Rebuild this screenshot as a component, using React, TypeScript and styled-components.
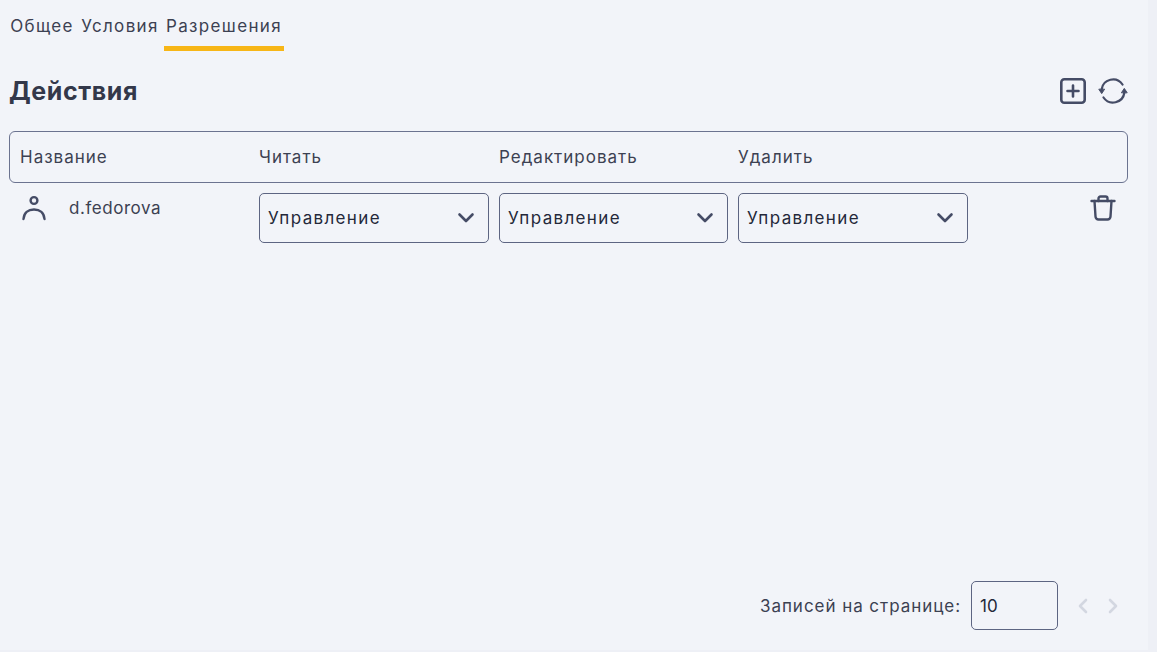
import React from "react";
import styled, { createGlobalStyle } from "styled-components";

const Global = createGlobalStyle`
  html, body { margin: 0; padding: 0; background: #eef0f6; }
  body { font-family: Inter, "Liberation Sans", sans-serif; color: #33384a; }
`;

const Panel = styled.div`
  width: 1148px;
  height: 650px;
  background: #f2f4f9;
  display: flex;
  flex-direction: column;
  padding: 0 20px 0 9px;
  box-sizing: border-box;
`;

const Tabs = styled.div`
  display: flex;
  gap: 4px;
  height: 51px;
  margin-left: -1px;
`;

const Tab = styled.div<{ $active?: boolean; $w: number }>`
  width: ${(p) => p.$w}px;
  box-sizing: border-box;
  padding-top: 16px;
  text-align: center;
  font-size: 17px;
  line-height: 20px;
  letter-spacing: 1.35px;
  white-space: nowrap;
  color: #3c4152;
  border-bottom: 5px solid ${(p) => (p.$active ? "#f7b617" : "transparent")};
`;

const TitleRow = styled.div`
  display: flex;
  align-items: center;
  justify-content: space-between;
  height: 80px;
`;

const Title = styled.h2`
  margin: 0 0 1px;
  font-size: 25px;
  font-weight: 700;
  letter-spacing: 0.6px;
  color: #33384a;
`;

const Actions = styled.div`
  display: flex;
  align-items: center;
  gap: 11px;
`;

const Icon = styled.svg`
  display: block;
  fill: none;
  stroke: #454c66;
  stroke-linecap: round;
  stroke-linejoin: round;
`;

const HeaderRow = styled.div`
  display: grid;
  grid-template-columns: 239px 240px 239px 1fr;
  align-items: center;
  height: 52px;
  box-sizing: border-box;
  padding: 0 10px;
  border: 1px solid #6b7390;
  border-radius: 6px;
`;

const HeaderCell = styled.div`
  font-size: 17px;
  letter-spacing: 1px;
  color: #3c4152;
`;

const DataRow = styled.div`
  display: grid;
  grid-template-columns: 239px 240px 239px 230px 1fr;
  padding: 10px 12px 0 11px;
`;

const UserCell = styled.div`
  display: flex;
  align-items: center;
  gap: 21px;
  height: 30px;
  font-size: 17px;
  letter-spacing: 0.55px;
  color: #3c4152;
`;

const SelectBox = styled.div<{ $w: number }>`
  width: ${(p) => p.$w}px;
  height: 50px;
  box-sizing: border-box;
  display: flex;
  align-items: center;
  justify-content: space-between;
  padding: 0 13px 0 8px;
  border: 1px solid #5d6582;
  border-radius: 5px;
  font-size: 17px;
  letter-spacing: 1.35px;
  color: #24283a;
`;

const TrashCell = styled.div`
  display: flex;
  justify-content: flex-end;
  padding-top: 2px;
`;

const Spacer = styled.div`
  flex: 1;
`;

const Footer = styled.div`
  display: flex;
  align-items: center;
  justify-content: flex-end;
  height: 49px;
  margin-bottom: 20px;
`;

const FooterLabel = styled.span`
  font-size: 17px;
  letter-spacing: 0.95px;
  color: #3c4152;
  margin-right: 10px;
`;

const PageSize = styled.div`
  width: 87px;
  height: 49px;
  box-sizing: border-box;
  display: flex;
  align-items: center;
  padding-left: 8px;
  border: 1px solid #5d6582;
  border-radius: 5px;
  font-size: 17px;
  color: #24283a;
`;

const Pager = styled.div`
  display: flex;
  align-items: center;
  gap: 14px;
  margin: 0 7px 0 17px;
`;

const MutedIcon = styled(Icon)`
  stroke: #d3d7e1;
`;

const Chevron = ({ dir }: { dir: "l" | "r" }) => (
  <MutedIcon width="16" height="20" viewBox="0 0 16 20" strokeWidth="2.6">
    <path d={dir === "l" ? "M11 4 L5 10 L11 16" : "M5 4 L11 10 L5 16"} />
  </MutedIcon>
);

const Select = ({ w }: { w: number }) => (
  <SelectBox $w={w}>
    Управление
    <Icon width="18" height="12" viewBox="0 0 18 12" strokeWidth="2.6">
      <path d="M2.5 2.5 L9 9 L15.5 2.5" />
    </Icon>
  </SelectBox>
);

export default function App() {
  return (
    <>
      <Global />
      <Panel>
        <Tabs>
          <Tab $w={68}>Общее</Tab>
          <Tab $w={80}>Условия</Tab>
          <Tab $w={120} $active>Разрешения</Tab>
        </Tabs>
        <TitleRow>
          <Title>Действия</Title>
          <Actions>
            <Icon width="28" height="28" viewBox="0 0 28 28" strokeWidth="2.6">
              <rect x="2.3" y="2.3" width="23.4" height="23.4" rx="3" />
              <path d="M14 8.5 V19.5 M8.5 14 H19.5" />
            </Icon>
            <Icon width="30" height="28" viewBox="0 0 30 28" strokeWidth="2.2">
              <path d="M3.6 12.5 A11.5 11.5 0 0 1 24.5 7.5" />
              <path d="M26.4 15.5 A11.5 11.5 0 0 1 5.5 20.5" />
              <path d="M1 12.5 L3.7 16.6 L6.4 12.5 Z" fill="#454c66" strokeWidth="1" />
              <path d="M23.6 15.5 L26.3 11.4 L29 15.5 Z" fill="#454c66" strokeWidth="1" />
            </Icon>
          </Actions>
        </TitleRow>
        <HeaderRow>
          <HeaderCell>Название</HeaderCell>
          <HeaderCell>Читать</HeaderCell>
          <HeaderCell>Редактировать</HeaderCell>
          <HeaderCell>Удалить</HeaderCell>
        </HeaderRow>
        <DataRow>
          <UserCell>
            <Icon width="28" height="28" viewBox="0 0 28 28" strokeWidth="2.4">
              <circle cx="14" cy="6.5" r="3.4" />
              <path d="M3.5 25 C4 19 8 15.5 14 15.5 C20 15.5 24 19 24.5 25" />
            </Icon>
            d.fedorova
          </UserCell>
          <Select w={230} />
          <Select w={229} />
          <Select w={230} />
          <TrashCell>
            <Icon width="26" height="26" viewBox="0 0 26 26" strokeWidth="2.4">
              <path d="M1.5 6 H24.5" />
              <path d="M8.5 6 V3.5 A2 2 0 0 1 10.5 1.5 H15.5 A2 2 0 0 1 17.5 3.5 V6" />
              <path d="M4.5 6 L5.5 21.5 A3 3 0 0 0 8.5 24.5 H17.5 A3 3 0 0 0 20.5 21.5 L21.5 6" />
            </Icon>
          </TrashCell>
        </DataRow>
        <Spacer />
        <Footer>
          <FooterLabel>Записей на странице:</FooterLabel>
          <PageSize>10</PageSize>
          <Pager>
            <Chevron dir="l" />
            <Chevron dir="r" />
          </Pager>
        </Footer>
      </Panel>
    </>
  );
}
